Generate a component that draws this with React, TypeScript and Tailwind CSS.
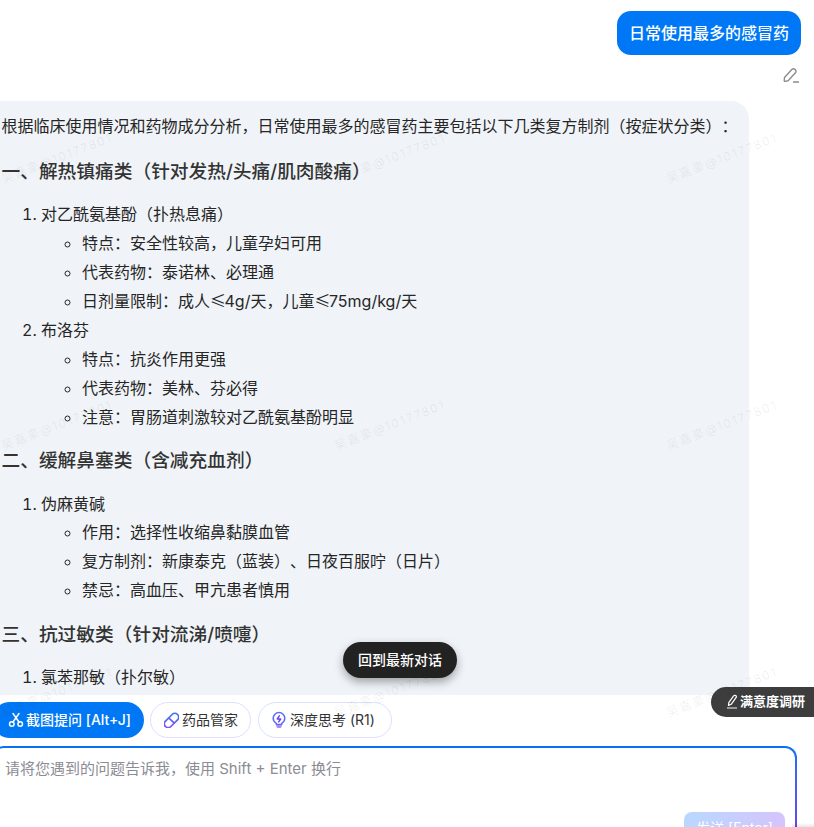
const font = 'font-["Inter","Noto_Sans_CJK_SC",sans-serif]'

const Le = () => <span className='font-["Noto_Sans_CJK_SC",sans-serif] tracking-[-1.500px]'>≤</span>

const sections = [
  {
    title: '一、解热镇痛类（针对发热/头痛/肌肉酸痛）',
    drugs: [
      {
        name: '对乙酰氨基酚（扑热息痛）',
        notes: [
          '特点：安全性较高，儿童孕妇可用',
          '代表药物：泰诺林、必理通',
          <>
            日剂量限制：成人
            <Le />
            4g/天，儿童
            <Le />
            75mg/kg/天
          </>,
        ],
      },
      {
        name: '布洛芬',
        notes: ['特点：抗炎作用更强', '代表药物：美林、芬必得', '注意：胃肠道刺激较对乙酰氨基酚明显'],
      },
    ],
  },
  {
    title: '二、缓解鼻塞类（含减充血剂）',
    drugs: [
      {
        name: '伪麻黄碱',
        notes: ['作用：选择性收缩鼻黏膜血管', '复方制剂：新康泰克（蓝装）、日夜百服咛（日片）', '禁忌：高血压、甲亢患者慎用'],
      },
    ],
  },
  {
    title: '三、抗过敏类（针对流涕/喷嚏）',
    drugs: [{ name: '氯苯那敏（扑尔敏）', notes: [] }],
  },
]

function Watermarks() {
  return (
    <div className="pointer-events-none absolute top-[132px] -left-[4px] z-30 grid grid-cols-[repeat(3,332.500px)] auto-rows-[267px]">
      {Array.from({ length: 9 }, (_, index) => (
        <div key={index} className="h-[50px] pl-[2px]">
          <span className="block w-[126px] origin-center -rotate-[21deg] whitespace-nowrap text-xs leading-[50px] tracking-[1.6px] text-black/[0.07]">
            吴嘉豪@10177801
          </span>
        </div>
      ))}
    </div>
  )
}

function ScissorsIcon() {
  return (
    <svg width="16" height="16" viewBox="0 0 16 16" fill="none" stroke="white" strokeWidth="1.500" strokeLinecap="round">
      <circle cx="3.800" cy="12" r="2.300" />
      <circle cx="12.200" cy="12" r="2.300" />
      <path d="M5 10 11 1.500M11 10 5 1.500" />
    </svg>
  )
}

function PillIcon() {
  return (
    <svg width="15" height="16" viewBox="0 0 15 16" fill="none" strokeWidth="1.700">
      <defs>
        <linearGradient id="pillStroke" x1="13" y1="2" x2="2" y2="14" gradientUnits="userSpaceOnUse">
          <stop stopColor="#2f7bf6" />
          <stop offset="1" stopColor="#8b4df5" />
        </linearGradient>
      </defs>
      <rect x="-1" y="4.700" width="17" height="7.600" rx="3.800" stroke="url(#pillStroke)" transform="rotate(-45 7.500 8.500)" />
      <path d="M4.700 5.800 10.300 11.200" stroke="url(#pillStroke)" />
    </svg>
  )
}

function BulbIcon() {
  return (
    <svg width="16" height="18" viewBox="0 0 16 18" fill="none">
      <path
        d="M5.300 12.300C3.400 11.300 2.200 9.400 2.200 7.300 2.200 4.100 4.800 1.500 8 1.500s5.800 2.600 5.800 5.800c0 2.100-1.200 4-3.100 5v1.200H5.300v-1.200Z"
        stroke="#5b6cf6"
        strokeWidth="1.500"
        strokeLinejoin="round"
      />
      <path d="M8.700 4.300 6.200 8h3.500L7.300 11.300" stroke="#6d3df2" strokeWidth="1.400" strokeLinejoin="round" />
      <path d="M5.300 14h5.400v1.300c0 .9-.7 1.700-1.700 1.700H7c-1 0-1.700-.8-1.700-1.700V14Z" fill="#a98bf8" />
    </svg>
  )
}

function EditIcon() {
  return (
    <svg width="18" height="18" viewBox="0 0 18 18" fill="none" stroke="#8c8c8c" strokeWidth="1.400">
      <path
        d="M2.500 11.500 9.800 3.500C10.800 2.500 12.200 2.500 13.200 3.400 14.200 4.300 14.300 5.800 13.400 6.800L6.100 14.700 3 15.400C2.500 15.500 2.200 15.200 2.200 14.700Z"
        strokeLinejoin="round"
      />
      <path d="M11.500 16h5" strokeLinecap="round" />
    </svg>
  )
}

function SurveyIcon() {
  return (
    <svg width="12" height="16" viewBox="0 0 12 16" fill="none" stroke="white" strokeLinejoin="round">
      <path d="M2.500 11.500 2.800 8.600 7.600 1.900C8.200 1.200 9 1.100 9.700 1.600 10.400 2.100 10.500 3 10 3.700L5.200 10.300 2.500 11.500Z" strokeWidth="1.200" />
      <path d="M1 14h10" strokeWidth="1.200" opacity="0.800" />
    </svg>
  )
}

export default function App() {
  return (
    <div className={`relative h-[827px] w-[814px] overflow-hidden bg-white ${font} text-[#262626] [text-spacing-trim:space-all]`}>
      <Watermarks />

      <div className="h-[695px] overflow-hidden pt-[11px]">
        <div className="flex justify-end pr-[13px]">
          <div className="rounded-[14px] bg-[#0078f5] px-3 py-[10px] text-base leading-6 font-medium text-white">
            日常使用最多的感冒药
          </div>
        </div>
        <div className="mt-[11px] flex justify-end pr-[14px]">
          <EditIcon />
        </div>

        <div className="mt-[17px] -ml-5 min-h-[640px] w-[769px] rounded-[18px] bg-[#f0f4f8] pt-[11px] pl-[21.500px] text-base leading-[28.800px]">
          <p className="mb-[14px]">根据临床使用情况和药物成分分析，日常使用最多的感冒药主要包括以下几类复方制剂（按症状分类）：</p>
          {sections.map((section) => (
            <section key={section.title}>
              <h3 className="mb-[11.500px] text-[18.720px] leading-[33.700px] font-medium text-[#333]">{section.title}</h3>
              <ol className="mb-[13px] list-decimal pl-[39.500px]">
                {section.drugs.map((drug) => (
                  <li key={drug.name}>
                    {drug.name}
                    {drug.notes.length > 0 && (
                      <ul className="list-[circle] pl-[41px]">
                        {drug.notes.map((note, index) => (
                          <li key={index}>{note}</li>
                        ))}
                      </ul>
                    )}
                  </li>
                ))}
              </ol>
            </section>
          ))}
        </div>
      </div>

      <div className="flex h-[51px] items-start gap-[6px] pt-[7px] text-sm text-[#333]">
        <button className="-ml-2 flex h-9 items-center gap-[2px] rounded-[18px] bg-[#0078f5] pr-[13px] pl-4 font-medium text-white">
          <ScissorsIcon />
          截图提问 [Alt+J]
        </button>
        <button className="flex h-9 items-center gap-[3px] rounded-[18px] border border-[#dbe1ff] pr-3 pl-[13px]">
          <PillIcon />
          药品管家
        </button>
        <button className="ml-px flex h-9 items-center gap-[3px] rounded-[18px] border border-[#dbe1ff] pr-4 pl-3">
          <BulbIcon />
          深度思考 (R1)
        </button>
      </div>

      <div className="-ml-2 h-[100px] w-[805px] rounded-[12px] bg-gradient-to-b from-[#0073f0] to-[#6a35f0] p-[2px]">
        <div className="relative h-full rounded-[10px] bg-white pt-[9px] pl-[11px] text-[15px] leading-6 text-[#8c8c94]">
          请将您遇到的问题告诉我，使用 Shift + Enter 换行
          <button className="absolute top-[64px] right-[10px] h-8 w-[101px] rounded-lg bg-gradient-to-r from-[#b8d8ff] to-[#d4c4fb] text-sm text-white">
            发送 [Enter]
          </button>
        </div>
      </div>

      <button className="absolute top-[642px] left-[343px] z-20 h-9 w-[114px] rounded-[18px] bg-[#222] text-sm font-medium text-white shadow-[0_4px_10px_rgba(0,0,0,0.35)]">
        回到最新对话
      </button>

      <button className="absolute top-[687px] right-0 z-20 flex h-[30px] w-[103px] items-center gap-[2px] rounded-l-[15px] bg-[#3d3d3d] pl-[15px] text-[13px] font-semibold text-white">
        <SurveyIcon />
        满意度调研
      </button>

      <div className="absolute right-0 bottom-0 h-[4px] w-[22px] bg-gradient-to-b from-transparent to-black/10" />
    </div>
  )
}
